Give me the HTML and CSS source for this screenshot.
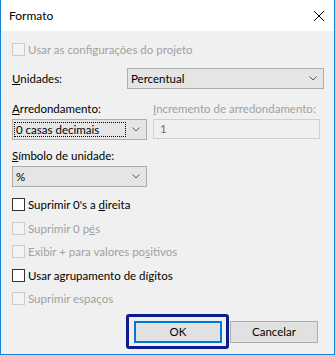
FILE: index.html
```html
<!DOCTYPE html>
<html lang="pt">
  <head>
    <meta charset="UTF-8" />
    <meta name="viewport" content="width=device-width, initial-scale=1.0" />
    <title>Formato</title>
    <link rel="stylesheet" href="styles.css">
  </head>
  <body>
    <div class="window">
      <div class="titlebar">
        <span class="title">Formato</span>
        <svg class="close" width="10" height="10" viewBox="0 0 10 10">
          <path d="M0 0L10 10M10 0L0 10" stroke="#000" stroke-width="1" />
        </svg>
      </div>
      <div class="content">
        <div class="check disabled"><span class="box"></span>Usar as configurações do projeto</div>

        <div class="units-row">
          <span class="label"><u>U</u>nidades:</span>
          <div class="combo combo-wide">
            <span class="value">Percentual</span>
            <svg class="chevron" width="8" height="5" viewBox="0 0 8 5"><polyline points="0.5,0.5 4,4 7.5,0.5" /></svg>
          </div>
        </div>

        <div class="round-row">
          <div class="field">
            <span class="label"><u>A</u>rredondamento:</span>
            <div class="combo combo-narrow focused">
              <span class="value">0 casas decimais</span>
              <svg class="chevron" width="8" height="5" viewBox="0 0 8 5"><polyline points="0.5,0.5 4,4 7.5,0.5" /></svg>
            </div>
          </div>
          <div class="field">
            <span class="label disabled"><u>I</u>ncremento de arredondamento:</span>
            <div class="textbox">1</div>
          </div>
        </div>

        <div class="field symbol-field">
          <span class="label"><u>S</u>ímbolo de unidade:</span>
          <div class="combo combo-narrow">
            <span class="value">%</span>
            <svg class="chevron" width="8" height="5" viewBox="0 0 8 5"><polyline points="0.5,0.5 4,4 7.5,0.5" /></svg>
          </div>
        </div>

        <div class="checks">
          <div class="check"><span class="box"></span>Suprimir 0's a&nbsp;<u>d</u>ireita</div>
          <div class="check disabled"><span class="box"></span>Suprimir 0 p<u>é</u>s</div>
          <div class="check disabled"><span class="box"></span>Exibir + para valores po<u>s</u>itivos</div>
          <div class="check"><span class="box"></span>Usar agrupamento de dí<u>g</u>itos</div>
          <div class="check disabled"><span class="box"></span>Suprimir espaços</div>
        </div>

        <div class="buttons">
          <button class="btn btn-default">OK</button>
          <button class="btn">Cancelar</button>
        </div>
      </div>
    </div>
  </body>
</html>
```

FILE: styles.css
```css
body {
  margin: 0;
  font-family: Lato, sans-serif;
  font-size: 11.5px;
  color: #000;
}
.window {
  width: 335px;
  height: 355px;
  box-sizing: border-box;
  border: 1px solid #1883d7;
  border-top: none;
  background-color: #f0f0f0;
}
.titlebar {
  height: 31px;
  background-color: #fff;
  display: flex;
  align-items: center;
  padding-left: 8px;
}
.title {
  font-size: 12px;
}
.close {
  margin-left: auto;
  margin-right: 10px;
}
.content {
  padding: 7px 10px 0 11px;
}
.check {
  display: flex;
  align-items: center;
  height: 23px;
}
.box {
  width: 13px;
  height: 13px;
  box-sizing: border-box;
  border: 1px solid #333;
  background-color: #fff;
  margin-right: 3px;
}
.disabled {
  color: #a0a0a0;
}
.check.disabled .box {
  border-color: #cccccc;
  background-color: #f3f3f3;
}
.units-row {
  display: flex;
  align-items: center;
  margin-top: 7px;
}
.units-row .label {
  width: 115px;
}
.combo {
  height: 21px;
  box-sizing: border-box;
  border: 1px solid #adadad;
  background-color: #e5e5e5;
  display: flex;
  align-items: center;
  padding: 0 6px 0 1px;
}
.combo .value {
  flex: 1;
  align-self: stretch;
  margin: 2px 6px 2px 0;
  padding-left: 1px;
  border: 1px solid transparent;
  display: flex;
  align-items: center;
}
.combo.focused .value {
  border: 1px dotted #000;
}
.chevron polyline {
  fill: none;
  stroke: #555;
  stroke-width: 1;
}
.combo-wide {
  width: 197px;
}
.combo-narrow {
  width: 135px;
}
.round-row {
  display: flex;
  gap: 6px;
  margin-top: 12px;
}
.field .label {
  display: block;
  line-height: 15px;
  margin-bottom: 3px;
}
.symbol-field {
  margin-top: 8px;
}
.textbox {
  width: 167px;
  height: 20px;
  box-sizing: border-box;
  border: 1px solid #d0d0d0;
  padding-left: 6px;
  line-height: 18px;
  color: #6d6d6d;
}
.checks {
  margin-top: 6px;
}
.checks .check {
  height: 23.5px;
}
.buttons {
  display: flex;
  justify-content: flex-end;
  gap: 8px;
  margin-top: 10px;
  padding-right: 6px;
}
.btn {
  width: 88px;
  height: 22px;
  box-sizing: border-box;
  border: 1px solid #adadad;
  background-color: #e1e1e1;
  font-family: inherit;
  font-size: 11.5px;
  color: #000;
  padding: 0;
}
.btn-default {
  position: relative;
  border: 2px solid #0078d7;
}
.btn-default::after {
  content: "";
  position: absolute;
  left: -10px;
  right: -9px;
  top: -9px;
  bottom: -8px;
  border: 3px solid #0e1b8c;
  border-radius: 3px;
}
```
